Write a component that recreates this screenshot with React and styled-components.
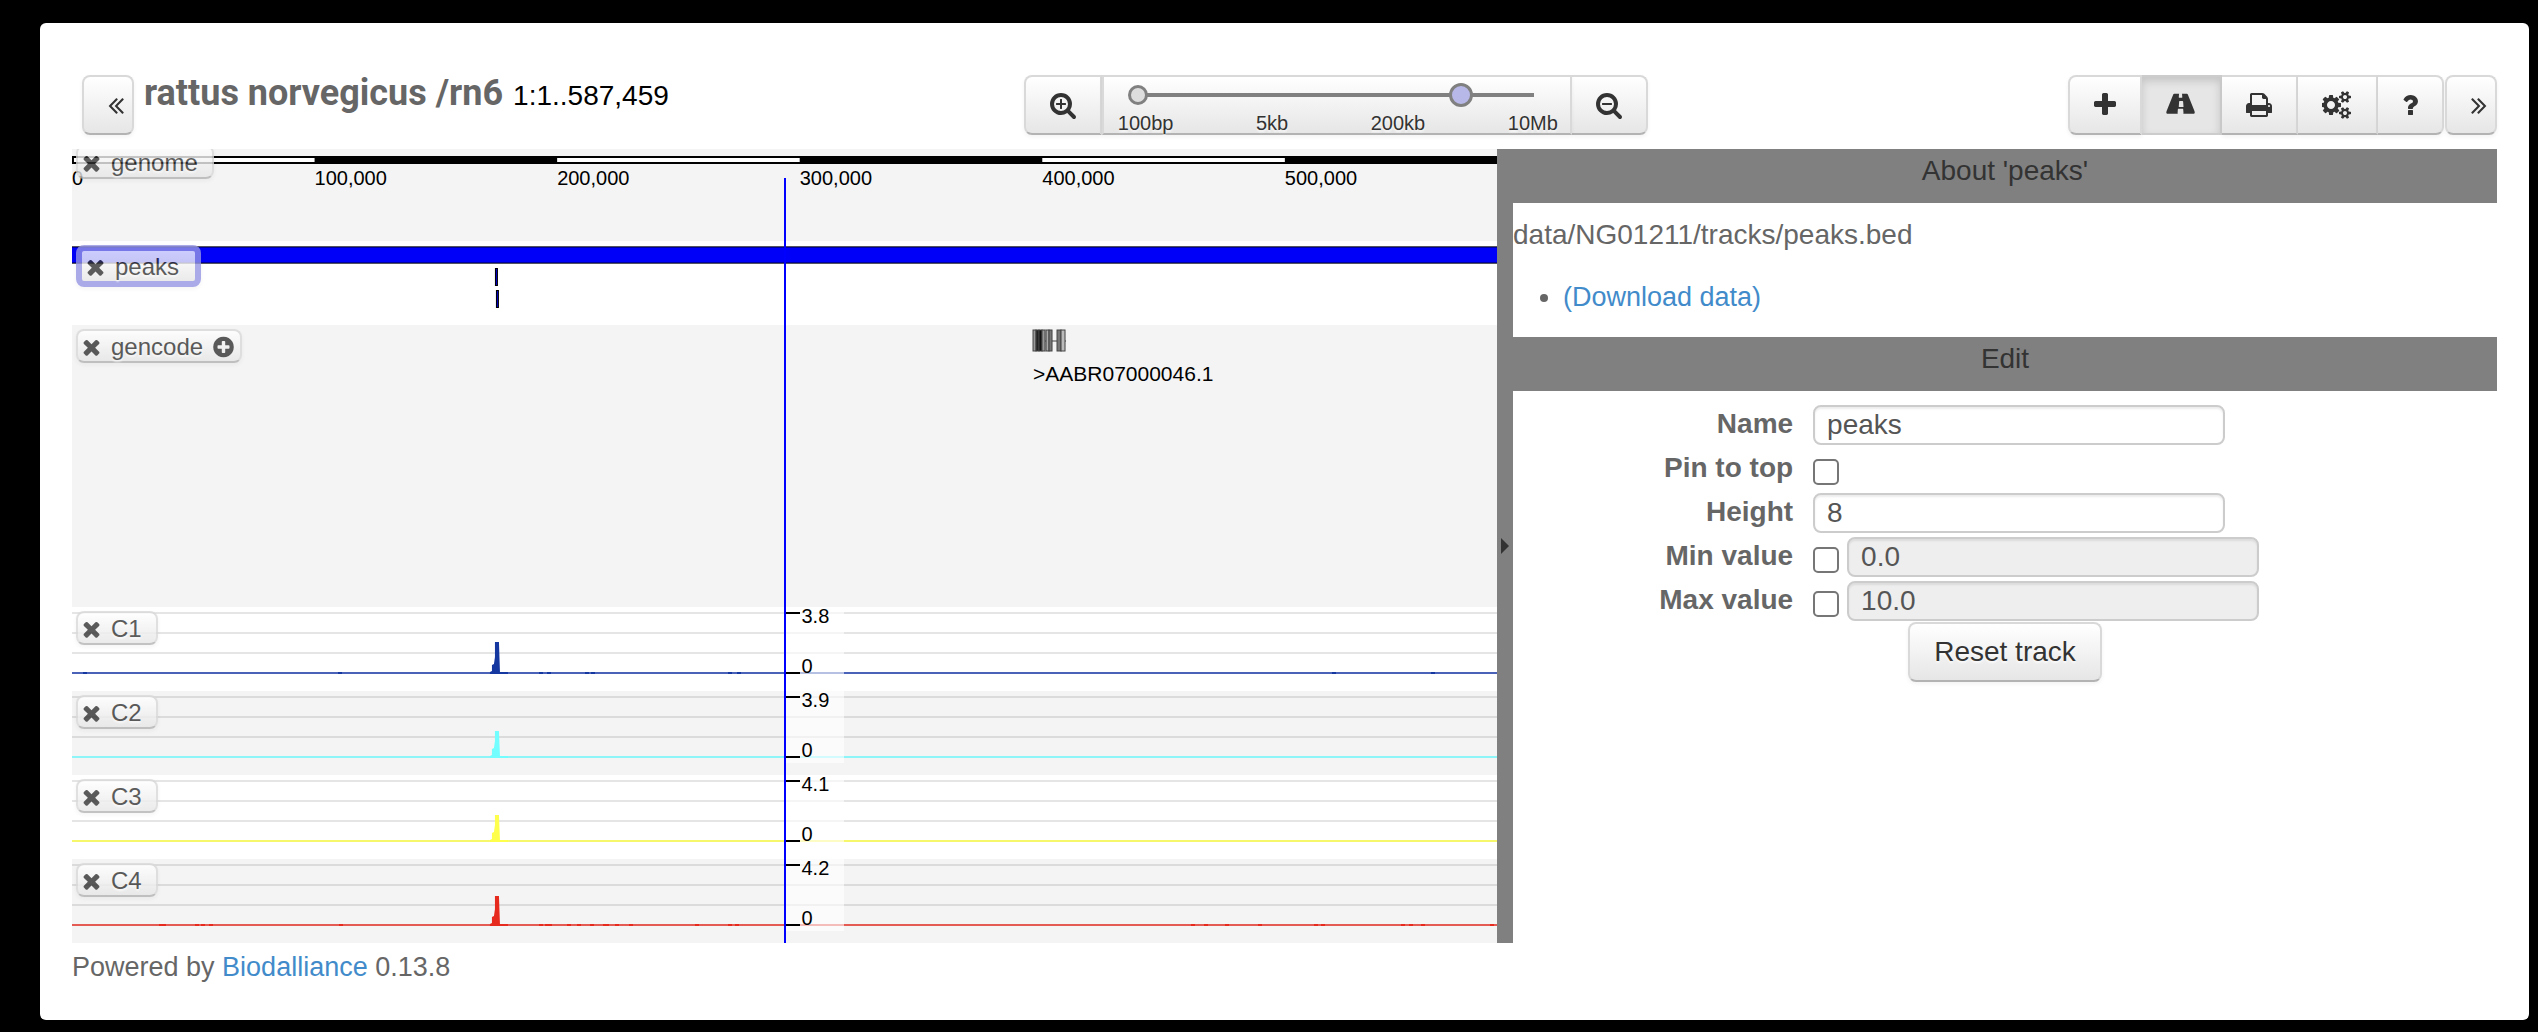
import React, { useState } from "react";
import styled, { createGlobalStyle, css } from "styled-components";

const REGION_LENGTH = 587459;
const pct = (bp) => `${(bp / REGION_LENGTH) * 100}%`;

const GlobalStyle = createGlobalStyle`
  *, *::before, *::after { box-sizing: border-box; }
  body {
    margin: 0;
    background: #000;
    color: #666;
    font-family: "Liberation Sans", Arial, sans-serif;
    font-size: 28px;
    line-height: 40px;
  }
  a { color: #428bca; text-decoration: none; }
  button, input { font: inherit; }
`;

/* ---------- icons ---------- */

const LENS =
  "M1216 832q0-185-131.5-316.5t-316.5-131.5-316.5 131.5-131.5 316.5 131.5 316.5 316.5 131.5 316.5-131.5 131.5-316.5zm512 832q0 53-37.5 90.5t-90.5 37.5q-54 0-90-38l-343-342q-179 124-399 124-143 0-273.5-55.5t-225-150-150-225-55.5-273.5 55.5-273.5 150-225 225-150 273.5-55.5 273.5 55.5 225 150 150 225 55.5 273.5q0 220-124 399l343 343q37 37 37 90z";

const SMALL_COG =
  "v140q0 16-149 31-12 27-30 52 51 113 51 138 0 4-4 7-122 71-124 71-8 0-46-47t-52-68q-20 2-30 2t-30-2q-14 21-52 68t-46 47q-2 0-124-71-4-3-4-7 0-25 51-138-18-25-30-52-149-15-149-31v-140q0-16 149-31 13-29 30-52-51-113-51-138 0-4 4-7 4-2 35-20t59-34 30-16q8 0 46 46.5t52 67.5q20-2 30-2t30 2q51-71 92-112l6-2q4 0 124 70 4 3 4 7 0 25-51 138 17 23 30 52 149 15 149 31z";

const ICONS = {
  plus: {
    box: [192, 1408],
    d: "M1600 736v192q0 40-28 68t-68 28h-416v416q0 40-28 68t-68 28h-192q-40 0-68-28t-28-68v-416h-416q-40 0-68-28t-28-68v-192q0-40 28-68t68-28h416v-416q0-40 28-68t68-28h192q40 0 68 28t28 68v416h416q40 0 68 28t28 68z",
  },
  times: {
    box: [192, 1408],
    d: "M1490 1322q0 40-28 68l-136 136q-28 28-68 28t-68-28l-294-294-294 294q-28 28-68 28t-68-28l-136-136q-28-28-28-68t28-68l294-294-294-294q-28-28-28-68t28-68l136-136q28-28 68-28t68 28l294 294 294-294q28-28 68-28t68 28l136 136q28 28 28 68t-28 68l-294 294 294 294q28 28 28 68z",
  },
  plusCircle: {
    box: [128, 1536],
    d: "M1344 960v-128q0-26-19-45t-45-19h-256v-256q0-26-19-45t-45-19h-128q-26 0-45 19t-19 45v256h-256q-26 0-45 19t-19 45v128q0 26 19 45t45 19h256v256q0 26 19 45t45 19h128q26 0 45-19t19-45v-256h256q26 0 45-19t19-45zm320-64q0 209-103 385.5t-279.5 279.5-385.5 103-385.5-103-279.5-279.5-103-385.5 103-385.5 279.5-279.5 385.5-103 385.5 103 279.5 279.5 103 385.5z",
  },
  searchPlus: {
    box: [64, 1664],
    d:
      "M1088 800v64q0 13-9.5 22.5t-22.5 9.5h-224v224q0 13-9.5 22.5t-22.5 9.5h-64q-13 0-22.5-9.5t-9.5-22.5v-224h-224q-13 0-22.5-9.5t-9.5-22.5v-64q0-13 9.5-22.5t22.5-9.5h224v-224q0-13 9.5-22.5t22.5-9.5h64q13 0 22.5 9.5t9.5 22.5v224h224q13 0 22.5 9.5t9.5 22.5z" +
      LENS,
  },
  searchMinus: {
    box: [64, 1664],
    d:
      "M1088 800v64q0 13-9.5 22.5t-22.5 9.5h-576q-13 0-22.5-9.5t-9.5-22.5v-64q0-13 9.5-22.5t22.5-9.5h576q13 0 22.5 9.5t9.5 22.5z" +
      LENS,
  },
  road: {
    box: [-64, 1920],
    d: "M1055 996v-4l-24-320q-1-13-11-22.5t-23-9.5h-186q-13 0-23 9.5t-11 22.5l-24 320v4q-1 12 8 20t21 8h244q12 0 21-8t8-20zm721 383q0 73-46 73h-704q13 0 22-9.5t8-22.5l-20-256q-1-13-11-22.5t-23-9.5h-272q-13 0-23 9.5t-11 22.5l-20 256q-1 13 8 22.5t22 9.5h-704q-46 0-46-73 0-54 26-116l417-1044q8-19 26-33t38-14h339q-13 0-23 9.5t-11 22.5l-15 192q-1 14 8 23t22 9h166q13 0 22-9t8-23l-15-192q-1-13-11-22.5t-23-9.5h339q20 0 38 14t26 33l417 1044q26 62 26 116z",
  },
  print: {
    box: [64, 1664],
    d: "M448 1536h896v-256h-896v256zm0-640h896v-384h-160q-40 0-68-28t-28-68v-160h-640v640zm1152 64q0-26-19-45t-45-19-45 19-19 45 19 45 45 19 45-19 19-45zm128 0v416q0 13-9.5 22.5t-22.5 9.5h-224v160q0 40-28 68t-68 28h-960q-40 0-68-28t-28-68v-160h-224q-13 0-22.5-9.5t-9.5-22.5v-416q0-79 56.5-135.5t135.5-56.5h64v-544q0-40 28-68t68-28h672q40 0 88 20t76 48l152 152q28 28 48 76t20 88v256h64q79 0 135.5 56.5t56.5 135.5z",
  },
  cogs: {
    box: [0, 1920],
    d:
      "M832 896q0-106-75-181t-181-75-181 75-75 181 75 181 181 75 181-75 75-181zm768 512q0-52-38-90t-90-38-90 38-38 90q0 53 37.5 90.5t90.5 37.5 90.5-37.5 37.5-90.5zm0-1024q0-52-38-90t-90-38-90 38-38 90q0 53 37.5 90.5t90.5 37.5 90.5-37.5 37.5-90.5zm-384 421v185q0 10-7 19.5t-16 10.5l-155 24q-11 35-32 76 34 48 90 115 7 11 7 20 0 12-7 19-23 30-82.5 89.5t-78.5 59.5q-11 0-21-7l-115-90q-37 19-77 31-11 108-23 155-7 24-30 24h-186q-11 0-20-7.5t-10-17.5l-23-153q-34-10-75-31l-118 89q-7 7-20 7-11 0-21-8-144-133-144-160 0-9 7-19 10-14 41-53t47-61q-23-44-35-82l-152-24q-10-1-17-9.5t-7-19.5v-185q0-10 7-19.5t16-10.5l155-24q11-35 32-76-34-48-90-115-7-11-7-20 0-12 7-20 22-30 82-89t79-59q11 0 21 7l115 90q34-18 77-32 11-108 23-154 7-24 30-24h186q11 0 20 7.5t10 17.5l23 153q34 10 75 31l118-89q8-7 20-7 11 0 21 8 144 133 144 160 0 8-7 19-12 16-42 54t-45 60q23 48 34 82l152 23q10 2 17 10.5t7 19.5z" +
      "M1856 1338" + SMALL_COG + "M1856 314" + SMALL_COG,
  },
  question: {
    box: [384, 1024],
    d: "M1088 1256v240q0 16-12 28t-28 12h-240q-16 0-28-12t-12-28v-240q0-16 12-28t28-12h240q16 0 28 12t12 28zm316-600q0 54-15.5 101t-35 76.5-55 59.5-57.5 43.5-61 35.5q-41 23-68.5 65t-27.5 67q0 17-12 32.5t-28 15.5h-240q-15 0-25.5-18.5t-10.5-37.5v-45q0-83 65-156.5t143-108.5q59-27 84-56t25-76q0-42-46.5-74t-107.5-32q-65 0-108 29-35 25-107 115-13 16-31 16-12 0-25-8l-164-125q-13-10-15.5-25t5.5-28q160-266 464-266 80 0 161 31t146 83 106 127.5 41 158.5z",
  },
  doubleLeft: {
    box: [384, 1024],
    d: "M1011 1376q0 13-10 23l-50 50q-10 10-23 10t-23-10l-466-466q-10-10-10-23t10-23l466-466q10-10 23-10t23 10l50 50q10 10 10 23t-10 23l-393 393 393 393q10 10 10 23zm384 0q0 13-10 23l-50 50q-10 10-23 10t-23-10l-466-466q-10-10-10-23t10-23l466-466q10-10 23-10t23 10l50 50q10 10 10 23t-10 23l-393 393 393 393q10 10 10 23z",
  },
};

const Glyph = styled.svg`
  display: block;
  flex: none;
  fill: currentColor;
  transform: ${(p) => (p.$flip ? "scaleX(-1)" : "none")};
`;

function Icon({ name, size = 28, flip }) {
  const { box, d } = ICONS[name];
  return (
    <Glyph
      $flip={flip}
      width={Math.round((box[1] * size) / 1792)}
      height={size}
      viewBox={`${box[0]} 0 ${box[1]} 1792`}
      aria-hidden="true"
    >
      <path d={d} />
    </Glyph>
  );
}

/* ---------- layout ---------- */

const Card = styled.main`
  margin: 23px 9px 12px 40px;
  padding: 52px 32px 33px;
  background: #fff;
  border-radius: 6px;
`;

const Toolbar = styled.header`
  display: flex;
  align-items: flex-start;
  margin-bottom: 14px;
`;

const LocationGroup = styled.div`
  display: flex;
  flex: 0 0 39.25%;
  gap: 10px;
  padding-left: 10px;
`;

const Heading = styled.div`
  display: flex;
  align-items: baseline;
  gap: 10px;
`;

const Title = styled.h1`
  margin: 0;
  color: #666;
  font: bold 36px/36px Roboto, sans-serif;
`;

const Location = styled.span`
  color: #000;
`;

const raised = css`
  color: #333;
  background: linear-gradient(#fff, #e6e6e6);
  border: 2px solid #d9d9d9;
  border-bottom-color: #b3b3b3;
  box-shadow: 0 2px 4px rgba(0, 0, 0, 0.05);
  text-shadow: 0 2px 2px rgba(255, 255, 255, 0.75);
`;

const Button = styled.button`
  ${raised}
  display: flex;
  align-items: center;
  height: 60px;
  padding: 0 24px;
  border-radius: 8px;
`;

const ScrollButton = styled(Button)`
  padding: 0 8px 0 24px;
`;

const ButtonGroup = styled.div`
  display: flex;
  & > * { border-radius: 0; border-left-width: 0; }
  & > *:first-child { border-left-width: 2px; border-radius: 8px 0 0 8px; }
  & > *:last-child { border-radius: 0 8px 8px 0; }
`;

const ToolButton = styled(Button)`
  ${(p) =>
    p.$active &&
    css`
      background: #e6e6e6;
      border-color: #ccc;
      box-shadow: inset 0 4px 8px rgba(0, 0, 0, 0.15);
    `}
`;

const Tools = styled.div`
  display: flex;
  gap: 1px;
  margin-left: auto;
`;

const ZoomPanel = styled.div`
  ${raised}
  position: relative;
  width: 470px;
  height: 60px;
  padding: 6px 12px 0 14px;
  font-size: 20px;
  line-height: 22px;
`;

const ZoomRange = styled.input`
  appearance: none;
  display: block;
  width: 418px;
  height: 24px;
  margin: 0 0 0 10px;
  background: linear-gradient(gray, gray) 10px 10px / 396px 4px no-repeat;
  &::-webkit-slider-thumb {
    appearance: none;
    width: 24px;
    height: 24px;
    border: 3px solid gray;
    border-radius: 50%;
    background: #b8b8e8;
  }
`;

const HomeMark = styled.span`
  position: absolute;
  left: 24px;
  top: 8px;
  width: 20px;
  height: 20px;
  border: 3px solid gray;
  border-radius: 50%;
  background: #ddd;
`;

const ZoomScale = styled.div`
  display: flex;
  justify-content: space-between;
  padding-top: 5px;
`;

const Browser = styled.div`
  display: grid;
  grid-template-columns: minmax(0, 57fr) minmax(0, 40fr);
`;

const Tiers = styled.section`
  position: relative;
  overflow: hidden;
`;

const Tier = styled.div`
  position: relative;
  height: ${(p) => p.$height}px;
  background: ${(p) => (p.$shaded ? "#f4f4f4" : "#fff")};
`;

const Plot = styled.svg`
  display: block;
  width: 100%;
  height: 100%;
  overflow: visible;
  font-size: 20px;
`;

const GeneName = styled.text`
  font-size: 21px;
`;

const Badge = styled.div`
  ${raised}
  position: absolute;
  left: 4px;
  top: ${(p) => (p.$raised ? -4 : 4)}px;
  display: flex;
  align-items: center;
  gap: 10px;
  padding: 2px ${(p) => (p.$expandable ? 6 : 14)}px 0 4px;
  border-radius: 8px;
  font-size: 24px;
  line-height: 28px;
  opacity: 0.8;
  ${(p) =>
    p.$selected &&
    css`
      padding-right: 16px;
      border: 6px solid #9595e3;
    `}
`;

const BadgeButton = styled.button`
  padding: 0;
  border: 0;
  background: none;
  color: inherit;
`;

const Cursor = styled.div`
  position: absolute;
  top: 29px;
  bottom: 0;
  left: 50%;
  width: 2px;
  margin-left: -1px;
  background: #00f;
`;

const Side = styled.aside`
  display: grid;
  grid-template-columns: 16px minmax(0, 1fr);
`;

const Handle = styled.button`
  display: flex;
  align-items: center;
  padding: 0 0 0 4px;
  border: 0;
  background: gray;
  &::before {
    content: "";
    border: 8px solid transparent;
    border-left-color: #333;
    border-right-width: 0;
  }
`;

const SideHeading = styled.h2`
  margin: 0;
  padding-bottom: 10px;
  background: gray;
  color: #333;
  font-size: 28px;
  font-weight: normal;
  line-height: 44px;
  text-align: center;
`;

const About = styled.div`
  padding: 12px 0 20px;
`;

const Downloads = styled.ul`
  margin: 22px 0 0;
  padding-left: 50px;
  font-size: 27px;
`;

const Form = styled.form`
  padding-top: 11px;
`;

const Field = styled.div`
  display: grid;
  grid-template-columns: 61fr 139fr;
  height: 44px;
  padding: 3px 0 1px;
`;

const Label = styled.label`
  padding-right: 20px;
  font-weight: bold;
  line-height: 38px;
  text-align: right;
`;

const Controls = styled.div`
  display: flex;
  gap: 8px;
`;

const TextInput = styled.input`
  width: 412px;
  height: 40px;
  padding: 0 12px;
  border: 2px solid #ccc;
  border-radius: 8px;
  background: #fff;
  color: #555;
  box-shadow: inset 0 2px 2px rgba(0, 0, 0, 0.075);
  &:disabled { background: #eee; }
`;

const CheckBox = styled.input`
  appearance: none;
  width: 26px;
  height: 26px;
  margin: 10px 0 0;
  border: 2px solid #767676;
  border-radius: 5px;
  background: #fff;
  &:checked { background: #428bca; }
`;

const ResetButton = styled(Button)`
  margin: 0 auto;
`;

const Footer = styled.footer`
  padding-top: 4px;
  font-size: 27px;
`;

/* ---------- tracks ---------- */

function TierBadge({ name, selected, expandable, raised: lifted }) {
  return (
    <Badge $selected={selected} $expandable={expandable} $raised={lifted}>
      <BadgeButton type="button" aria-label={`Remove ${name}`}>
        <Icon name="times" size={24} />
      </BadgeButton>
      {name}
      {expandable && (
        <BadgeButton type="button" aria-label={`Expand ${name}`}>
          <Icon name="plusCircle" size={24} />
        </BadgeButton>
      )}
    </Badge>
  );
}

const POSITIONS = [0, 100000, 200000, 300000, 400000, 500000];

function GenomeTier() {
  return (
    <Tier $height={92} $shaded>
      <Plot>
        <rect y="7" width="100%" height="8" />
        {POSITIONS.filter((_, i) => i % 2 === 0).map((bp) => (
          <rect key={bp} x={pct(bp || 800)} y="9" width={pct(bp ? 100000 : 99200)} height="4" fill="#fff" />
        ))}
        {POSITIONS.map((bp) => (
          <text key={bp} x={pct(bp)} y="36">{bp.toLocaleString("en-US")}</text>
        ))}
      </Plot>
      <TierBadge name="genome" raised />
    </Tier>
  );
}

function PeaksTier() {
  return (
    <Tier $height={84}>
      <Plot>
        <rect y="5" width="100%" height="18" fill="#55555f" />
        <rect y="6" width="100%" height="16" fill="#00009a" />
        <rect y="7" width="100%" height="14" fill="#0000f8" />
        <rect x="29.68%" y="27" width="3" height="18" fill="#000" />
        <rect x="29.75%" y="28" width="1" height="16" fill="#0000c8" />
        <rect x="29.75%" y="49" width="3" height="18" fill="#000" />
        <rect x="29.82%" y="50" width="1" height="16" fill="#0000c8" />
      </Plot>
      <TierBadge name="peaks" selected />
    </Tier>
  );
}

const EXONS = [
  { x: 0, w: 3, fill: "#999" },
  { x: 3, w: 3, fill: "#222" },
  { x: 6, w: 3, fill: "#111" },
  { x: 9, w: 3, fill: "#999" },
  { x: 13, w: 3, fill: "#aaa" },
  { x: 16, w: 3, fill: "#777" },
  { x: 24, w: 4, fill: "#777" },
  { x: 28, w: 4, fill: "#bbb" },
];

function GencodeTier() {
  return (
    <Tier $height={282} $shaded>
      <Plot>
        <svg x="67.44%" overflow="visible">
          <line x1="0" x2="33" y1="16" y2="16" stroke="#444" />
          {EXONS.map((e) => (
            <rect key={e.x} x={e.x} y="5" width={e.w} height="21" fill={e.fill} stroke="#444" />
          ))}
          <GeneName y="56">&gt;AABR07000046.1</GeneName>
        </svg>
      </Plot>
      <TierBadge name="gencode" expandable />
    </Tier>
  );
}

const SIGNALS = [
  {
    name: "C1",
    max: "3.8",
    line: "#4a63b8",
    fill: "#1437a0",
    top: 35,
    noise: [11, 266, 432, 467, 475, 513, 519, 656, 665, 1260, 1359],
  },
  { name: "C2", max: "3.9", line: "#8df5f7", fill: "#72fdff", top: 40, noise: [] },
  { name: "C3", max: "4.1", line: "#f7f76c", fill: "#feff4c", top: 40, noise: [] },
  {
    name: "C4",
    max: "4.2",
    line: "#e35b52",
    fill: "#e62b1e",
    top: 37,
    noise: [
      87, 90, 123, 129, 137, 267, 467, 473, 476, 495, 505, 518, 531, 533, 543, 557, 623, 656, 663,
      1119, 1132, 1153, 1186, 1242, 1249, 1329, 1337, 1349, 1418,
    ],
  },
];

function SignalTier({ signal, shaded }) {
  const { name, max, line, fill, top, noise } = signal;
  return (
    <Tier $height={84} $shaded={shaded}>
      <Plot>
        {[5, 25, 45].map((y) => (
          <rect key={y} y={y} width="100%" height="2" fill="#000" opacity="0.1" />
        ))}
        <rect y="65" width="100%" height="2" fill={line} />
        {noise.map((x) => (
          <rect key={x} x={`${(x / 1425) * 100}%`} y="65" width="4" height="2" fill={fill} />
        ))}
        <svg x="29.33%" overflow="visible">
          <path d={`M0 67V65L2 64V58L4 57L5 50V${top}H9L10 65H18V67Z`} fill={fill} />
        </svg>
        <svg x="50%" overflow="visible" shapeRendering="crispEdges">
          <rect x="1" width="58" height="72" fill="#fff" opacity="0.6" />
          <rect x="1" y="5" width="14" height="2" />
          <rect x="1" y="65" width="14" height="2" />
          <text x="17" y="16">{max}</text>
          <text x="17" y="66">0</text>
        </svg>
      </Plot>
      <TierBadge name={name} />
    </Tier>
  );
}

/* ---------- page ---------- */

const TOOLS = [
  { icon: "plus", label: "Add track" },
  { icon: "road", label: "Track editor", active: true },
  { icon: "print", label: "Export image" },
  { icon: "cogs", label: "Options" },
  { icon: "question", label: "Help" },
];

export default function App() {
  const [zoom, setZoom] = useState(163);
  const [name, setName] = useState("peaks");
  const [height, setHeight] = useState("8");

  return (
    <>
      <GlobalStyle />
      <Card>
        <Toolbar>
          <LocationGroup>
            <ScrollButton type="button" aria-label="Scroll left">
              <Icon name="doubleLeft" />
            </ScrollButton>
            <Heading>
              <Title>rattus norvegicus /rn6</Title>
              <Location>1:1..587,459</Location>
            </Heading>
          </LocationGroup>
          <ButtonGroup>
            <ToolButton type="button" aria-label="Zoom in">
              <Icon name="searchPlus" />
            </ToolButton>
            <ZoomPanel>
              <ZoomRange
                type="range"
                min="0"
                max="200"
                aria-label="Zoom"
                value={zoom}
                onChange={(e) => setZoom(e.target.value)}
              />
              <HomeMark />
              <ZoomScale>
                <span>100bp</span>
                <span>5kb</span>
                <span>200kb</span>
                <span>10Mb</span>
              </ZoomScale>
            </ZoomPanel>
            <ToolButton type="button" aria-label="Zoom out">
              <Icon name="searchMinus" />
            </ToolButton>
          </ButtonGroup>
          <Tools>
            <ButtonGroup>
              {TOOLS.map((t) => (
                <ToolButton key={t.icon} type="button" aria-label={t.label} $active={t.active}>
                  <Icon name={t.icon} />
                </ToolButton>
              ))}
            </ButtonGroup>
            <ScrollButton type="button" aria-label="Scroll right">
              <Icon name="doubleLeft" flip />
            </ScrollButton>
          </Tools>
        </Toolbar>

        <Browser>
          <Tiers>
            <GenomeTier />
            <PeaksTier />
            <GencodeTier />
            {SIGNALS.map((s, i) => (
              <SignalTier key={s.name} signal={s} shaded={i % 2 === 1} />
            ))}
            <Cursor />
          </Tiers>
          <Side>
            <Handle type="button" aria-label="Collapse panel" />
            <div>
              <SideHeading>About 'peaks'</SideHeading>
              <About>
                <div>data/NG01211/tracks/peaks.bed</div>
                <Downloads>
                  <li>
                    <a href="#download">(Download data)</a>
                  </li>
                </Downloads>
              </About>
              <SideHeading>Edit</SideHeading>
              <Form>
                <Field>
                  <Label htmlFor="name">Name</Label>
                  <Controls>
                    <TextInput id="name" value={name} onChange={(e) => setName(e.target.value)} />
                  </Controls>
                </Field>
                <Field>
                  <Label htmlFor="pin">Pin to top</Label>
                  <Controls>
                    <CheckBox id="pin" type="checkbox" />
                  </Controls>
                </Field>
                <Field>
                  <Label htmlFor="height">Height</Label>
                  <Controls>
                    <TextInput id="height" value={height} onChange={(e) => setHeight(e.target.value)} />
                  </Controls>
                </Field>
                <Field>
                  <Label htmlFor="min">Min value</Label>
                  <Controls>
                    <CheckBox id="min" type="checkbox" />
                    <TextInput aria-label="Min value" defaultValue="0.0" disabled />
                  </Controls>
                </Field>
                <Field>
                  <Label htmlFor="max">Max value</Label>
                  <Controls>
                    <CheckBox id="max" type="checkbox" />
                    <TextInput aria-label="Max value" defaultValue="10.0" disabled />
                  </Controls>
                </Field>
                <ResetButton type="button">Reset track</ResetButton>
              </Form>
            </div>
          </Side>
        </Browser>

        <Footer>
          Powered by <a href="#biodalliance">Biodalliance</a> 0.13.8
        </Footer>
      </Card>
    </>
  );
}
